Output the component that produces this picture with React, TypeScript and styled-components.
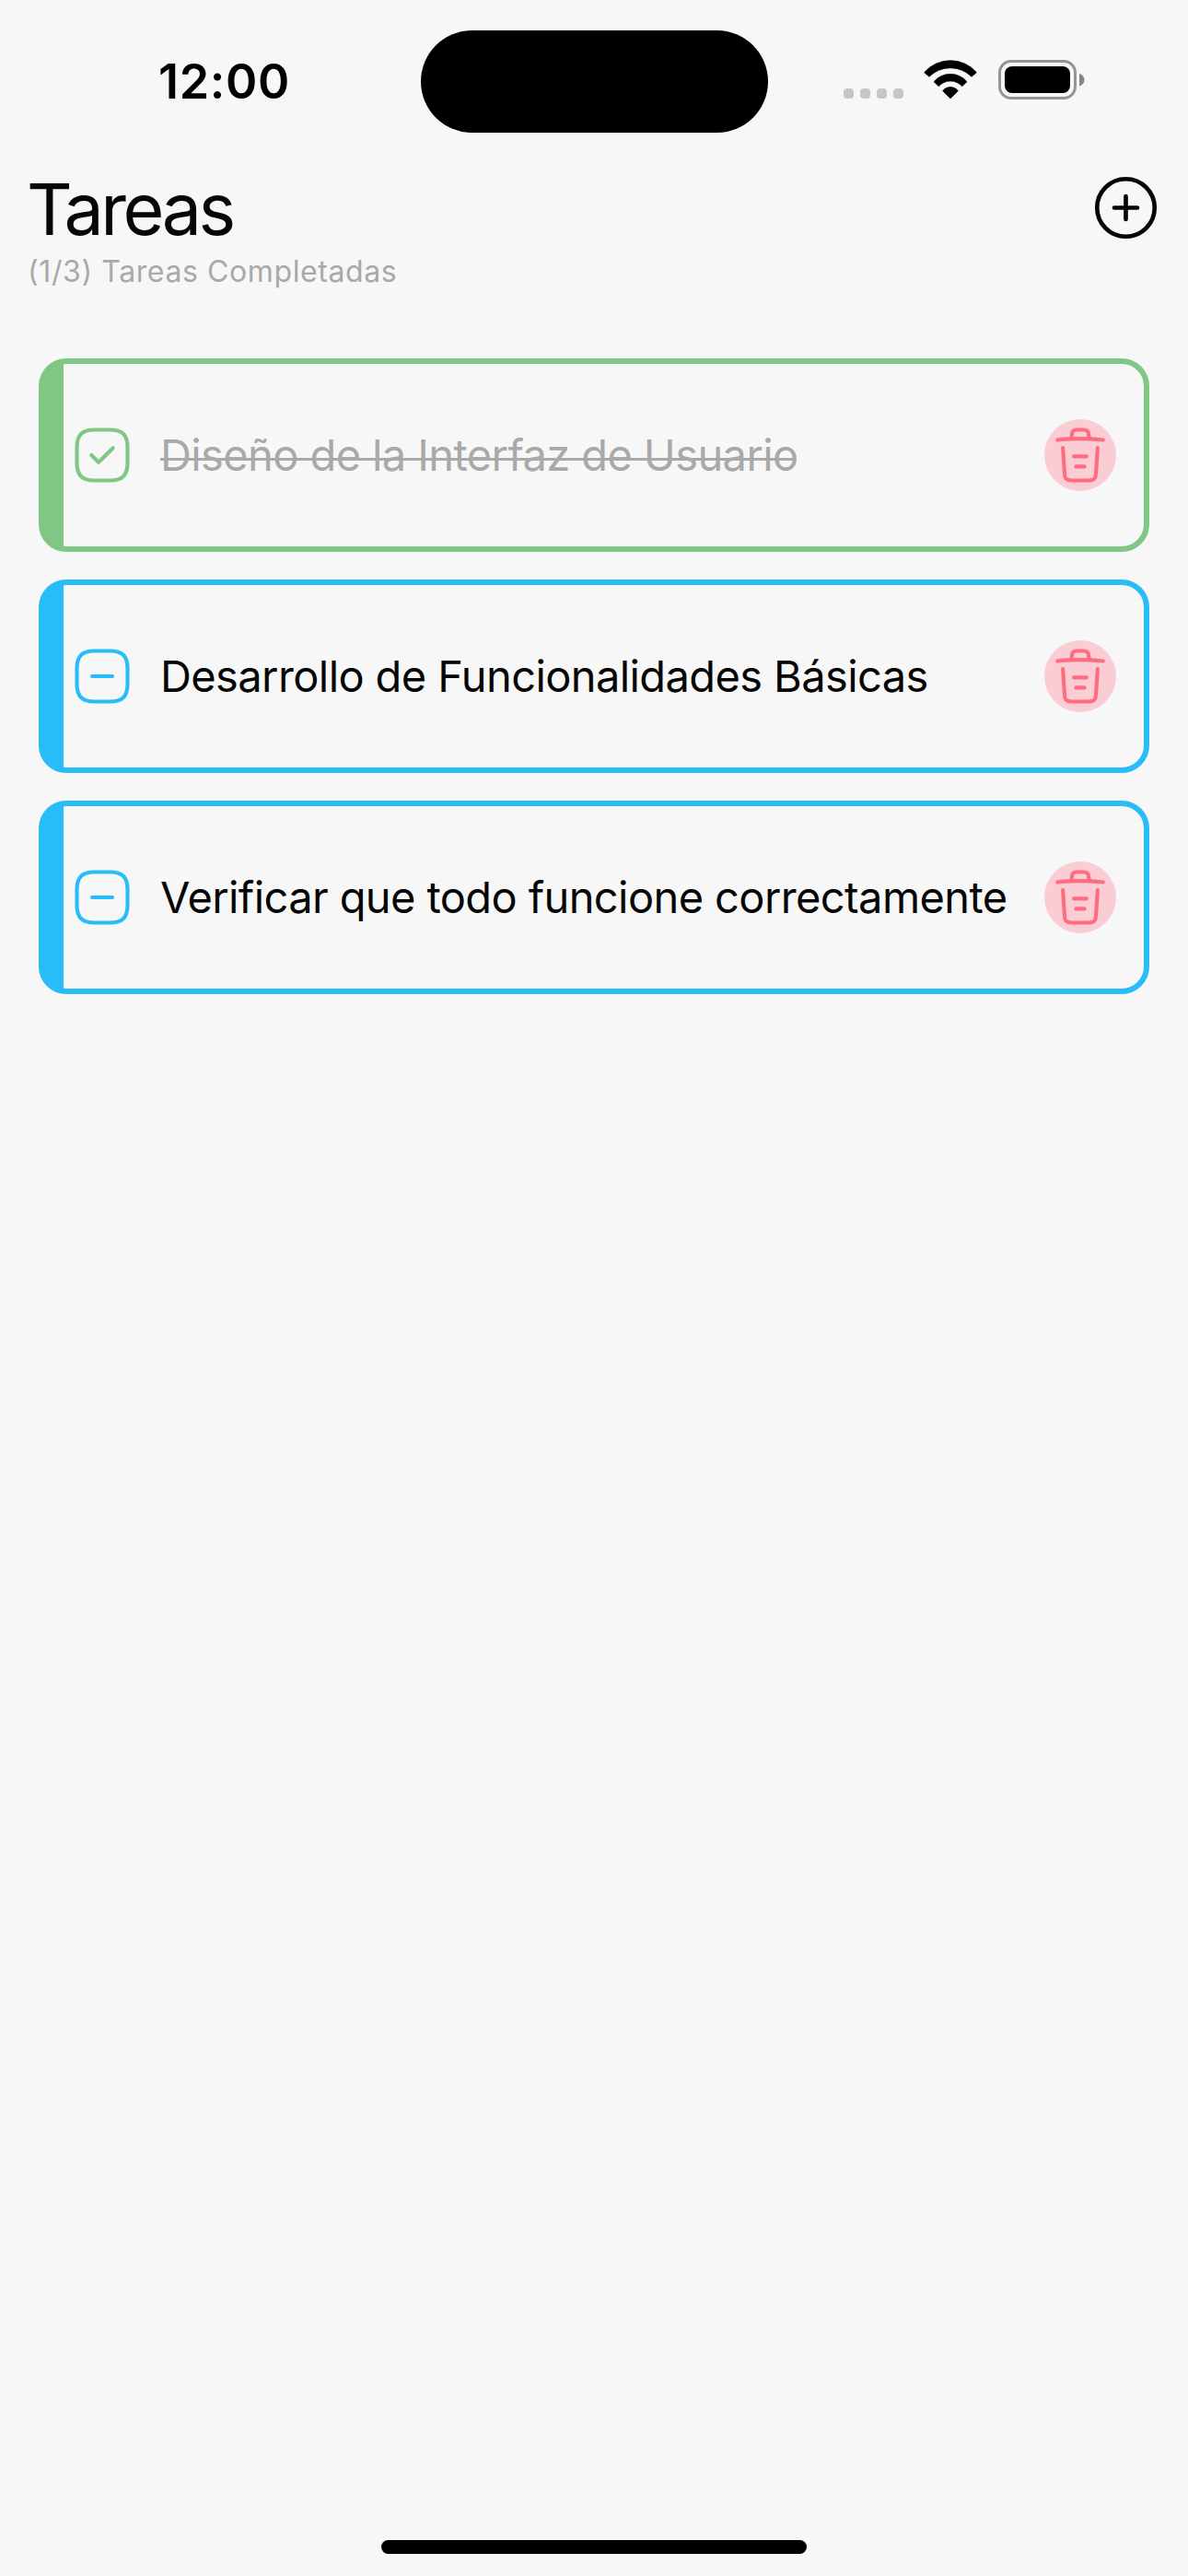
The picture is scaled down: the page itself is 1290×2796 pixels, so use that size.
import React from "react";
import styled, { createGlobalStyle } from "styled-components";

const GlobalStyle = createGlobalStyle`
  * { box-sizing: border-box; }
  html, body { margin: 0; background: #f7f7f7; }
  button { border: 0; padding: 0; background: none; cursor: pointer; }
`;

const Screen = styled.div`
  display: flex;
  flex-direction: column;
  width: 1290px;
  height: 2796px;
  background: #f7f7f7;
  color: #060606;
  font-family: Inter, "Liberation Sans", sans-serif;
`;

const StatusBar = styled.header`
  display: grid;
  grid-template-columns: 1fr 377px 1fr;
  padding-top: 33px;
  height: 177px;
  flex: none;
`;

const Clock = styled.time`
  justify-self: start;
  margin: 24px 0 0 172px;
  font-size: 52px;
  line-height: 63px;
  font-weight: 600;
  letter-spacing: 0.7px;
  color: #000;
  white-space: nowrap;
`;

const Island = styled.div`
  height: 111px;
  border-radius: 56px;
  background: #000;
`;

const StatusIcons = styled.div`
  display: flex;
  align-items: flex-start;
  padding: 32px 0 0 82px;
`;

const SignalDots = styled.div`
  display: flex;
  gap: 7px;
  margin: 31px 22.5px 0 0;
`;

const Dot = styled.i`
  width: 11px;
  height: 11px;
  border-radius: 4px;
  background: #c6c6c6;
`;

const WifiSvg = styled.svg`
  width: 58px;
  height: 43px;
  margin-right: 22.5px;
  flex: none;
`;

const BatterySvg = styled.svg`
  width: 94px;
  height: 43px;
  flex: none;
`;

const TopBar = styled.section`
  display: flex;
  justify-content: space-between;
  align-items: flex-start;
  padding: 0 30px;
  height: 212px;
  flex: none;
`;

const Title = styled.h1`
  margin: 3px 0 0 -1px;
  font-size: 77px;
  line-height: 94px;
  font-weight: 400;
  letter-spacing: -3.5px;
`;

const Subtitle = styled.p`
  margin: 1px 0 0;
  font-size: 32px;
  line-height: 39px;
  letter-spacing: 0.6px;
  color: #a9a9a9;
`;

const AddButton = styled.button`
  display: flex;
  margin-top: 11px;
  color: #060606;
`;

const TaskList = styled.main`
  display: flex;
  flex-direction: column;
  gap: 30px;
  padding: 0 42px;
`;

const Card = styled.article<{ $tint: string }>`
  display: flex;
  align-items: center;
  height: 210px;
  padding: 0 30px;
  border: 6px solid ${(p) => p.$tint};
  border-radius: 30px;
  background: linear-gradient(${(p) => p.$tint}, ${(p) => p.$tint}) left / 27px 100% no-repeat border-box;
`;

const CheckButton = styled.button<{ $tint: string }>`
  display: flex;
  flex: none;
  color: ${(p) => p.$tint};
`;

const TaskName = styled.span<{ $done: boolean }>`
  margin-left: 30px;
  font-size: 47px;
  line-height: 58px;
  letter-spacing: -0.6px;
  white-space: nowrap;
  color: ${(p) => (p.$done ? "#a9a9a9" : "#060606")};
  background: ${(p) =>
    p.$done ? "linear-gradient(#a9a9a9, #a9a9a9) 0 32px / calc(100% - 3px) 3px no-repeat" : "none"};
`;

const DeleteButton = styled.button`
  display: flex;
  align-items: center;
  justify-content: center;
  flex: none;
  width: 78px;
  height: 78px;
  margin-left: auto;
  border-radius: 50%;
  background: #f9cdd3;
  color: #ff6b81;
`;

const HomeIndicator = styled.div`
  width: 462px;
  height: 15px;
  margin: auto auto 24px;
  border-radius: 8px;
  background: #000;
  flex: none;
`;

const LineIcon = ({ size, paths }: { size: number; paths: string[] }) => (
  <svg
    width={size}
    height={size}
    viewBox="0 0 24 24"
    fill="none"
    stroke="currentColor"
    strokeWidth={1.5}
    strokeLinecap="round"
    strokeLinejoin="round"
  >
    {paths.map((d) => (
      <path key={d} d={d} />
    ))}
  </svg>
);

const SQUARE = "M9 22H15C20 22 22 20 22 15V9C22 4 20 2 15 2H9C4 2 2 4 2 9V15C2 20 4 22 9 22Z";
const ICONS = {
  add: ["M12 22C17.5 22 22 17.5 22 12S17.5 2 12 2 2 6.5 2 12 6.5 22 12 22Z", "M8 12H16", "M12 16V8"],
  tick: [SQUARE, "M7.75 12L10.58 14.83L16.25 9.17"],
  minus: [SQUARE, "M8 12H16"],
  trash: [
    "M21 5.98C17.67 5.65 14.32 5.48 10.98 5.48C9 5.48 7.02 5.58 5.04 5.78L3 5.98",
    "M8.5 4.97L8.72 3.66C8.88 2.71 9 2 10.69 2H13.31C15 2 15.13 2.75 15.28 3.67L15.5 4.97",
    "M18.85 9.14L18.2 19.21C18.09 20.78 18 22 15.21 22H8.79C6 22 5.91 20.78 5.8 19.21L5.15 9.14",
    "M10.33 16.5H13.66",
    "M9.5 12.5H14.5",
  ],
};

const tasks = [
  { name: "Diseño de la Interfaz de Usuario", done: true },
  { name: "Desarrollo de Funcionalidades Básicas", done: false },
  { name: "Verificar que todo funcione correctamente", done: false },
];

export default function App() {
  return (
    <Screen>
      <GlobalStyle />
      <StatusBar>
        <Clock>12:00</Clock>
        <Island />
        <StatusIcons>
          <SignalDots>
            <Dot />
            <Dot />
            <Dot />
            <Dot />
          </SignalDots>
          <WifiSvg viewBox="0 0 174 129" stroke="#000" strokeWidth={2} strokeLinejoin="round">
            <path d="M2 41A112 112 0 0 1 172 41L156 55A97 97 0 0 0 18 55Z" />
            <path d="M33 71A71 71 0 0 1 141 71L125 86A51 51 0 0 0 49 86Z" />
            <path d="M62 101A31 31 0 0 1 112 101L87 126Z" />
          </WifiSvg>
          <BatterySvg viewBox="0 0 94 43">
            <rect x="1.5" y="1.5" width="82" height="40" rx="12.5" fill="none" stroke="#959595" strokeWidth="3" />
            <rect x="7" y="7" width="71" height="29" rx="8" />
            <path d="M88 15C95.3 17 95.3 26.5 88 28.500Z" fill="#858585" />
          </BatterySvg>
        </StatusIcons>
      </StatusBar>
      <TopBar>
        <div>
          <Title>Tareas</Title>
          <Subtitle>(1/3) Tareas Completadas</Subtitle>
        </div>
        <AddButton aria-label="Agregar tarea">
          <LineIcon size={75} paths={ICONS.add} />
        </AddButton>
      </TopBar>
      <TaskList>
        {tasks.map(({ name, done }) => {
          const tint = done ? "#81c784" : "#29bdf7";
          return (
            <Card key={name} $tint={tint}>
              <CheckButton $tint={tint} aria-label="Cambiar estado">
                <LineIcon size={66} paths={done ? ICONS.tick : ICONS.minus} />
              </CheckButton>
              <TaskName $done={done}>{name}</TaskName>
              <DeleteButton aria-label="Eliminar tarea">
                <LineIcon size={66} paths={ICONS.trash} />
              </DeleteButton>
            </Card>
          );
        })}
      </TaskList>
      <HomeIndicator />
    </Screen>
  );
}
